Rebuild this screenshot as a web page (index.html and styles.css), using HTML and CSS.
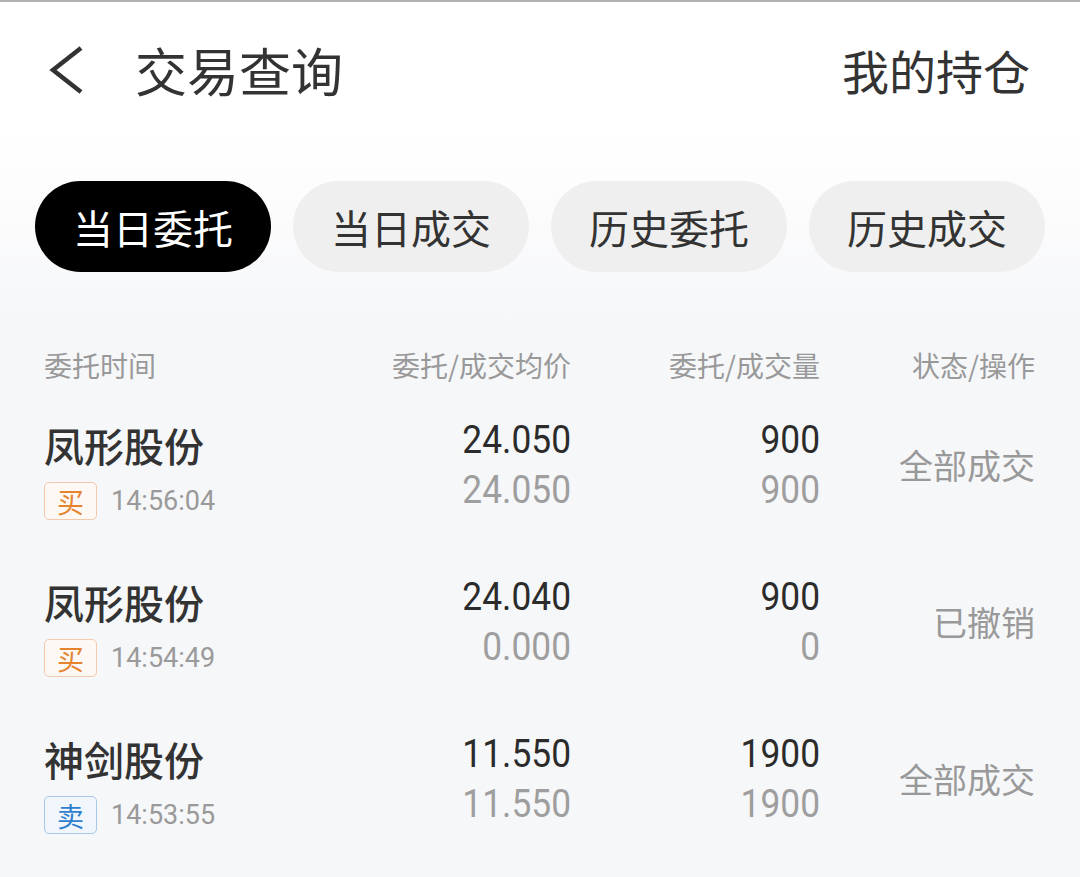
FILE: index.html
```html
<!DOCTYPE html>
<html lang="zh-CN">
<head>
<meta charset="utf-8">
<title>交易查询</title>
<link rel="stylesheet" href="styles.css">
</head>
<body>
<div class="page">
  <header class="topbar">
    <div class="left">
      <svg class="back" width="36" height="50" viewBox="0 0 36 50"><path d="M33 3 L5 25 L33 47" fill="none" stroke="#333" stroke-width="4.5" stroke-linejoin="miter"/></svg>
      <h1 class="title">交易查询</h1>
    </div>
    <div class="right">我的持仓</div>
  </header>

  <nav class="tabs">
    <div class="tab active">当日委托</div>
    <div class="tab">当日成交</div>
    <div class="tab">历史委托</div>
    <div class="tab">历史成交</div>
  </nav>

  <div class="table">
    <div class="grid head">
      <div class="c1">委托时间</div>
      <div class="c2">委托/成交均价</div>
      <div class="c3">委托/成交量</div>
      <div class="c4">状态/操作</div>
    </div>

    <div class="grid row">
      <div class="c1">
        <div class="name">凤形股份</div>
        <div class="meta"><span class="badge buy">买</span><span class="time">14:56:04</span></div>
      </div>
      <div class="c2 num"><div class="n1">24.050</div><div class="n2">24.050</div></div>
      <div class="c3 num"><div class="n1">900</div><div class="n2">900</div></div>
      <div class="c4 status">全部成交</div>
    </div>

    <div class="grid row">
      <div class="c1">
        <div class="name">凤形股份</div>
        <div class="meta"><span class="badge buy">买</span><span class="time">14:54:49</span></div>
      </div>
      <div class="c2 num"><div class="n1">24.040</div><div class="n2">0.000</div></div>
      <div class="c3 num"><div class="n1">900</div><div class="n2">0</div></div>
      <div class="c4 status">已撤销</div>
    </div>

    <div class="grid row">
      <div class="c1">
        <div class="name">神剑股份</div>
        <div class="meta"><span class="badge sell">卖</span><span class="time">14:53:55</span></div>
      </div>
      <div class="c2 num"><div class="n1">11.550</div><div class="n2">11.550</div></div>
      <div class="c3 num"><div class="n1">1900</div><div class="n2">1900</div></div>
      <div class="c4 status">全部成交</div>
    </div>
  </div>
</div>
</body>
</html>
```
FILE: styles.css
```css
* { box-sizing: border-box; margin: 0; padding: 0; }
html, body { width: 1080px; height: 877px; overflow: hidden; }
body {
  font-family: "Noto Sans CJK SC", "Noto Sans", sans-serif;
  color: #333;
  background: #f6f7f9;
}
.page {
  height: 877px;
  border-top: 2px solid #b3b3b3;
  background: linear-gradient(to bottom, #ffffff 0px, #ffffff 130px, #f6f7f9 320px, #f6f7f9 100%);
}
.topbar {
  height: 144px;
  display: flex;
  justify-content: space-between;
  align-items: flex-start;
  padding: 38px 50px 0 48px;
}
.left { display: flex; align-items: center; }
.back { display: block; margin-right: 51px; }
.title { font-size: 52px; font-weight: 400; line-height: 60px; color: #333; }
.right { font-size: 47px; line-height: 60px; color: #333; }

.tabs {
  display: flex;
  gap: 22px;
  padding: 35px 35px 0 35px;
}
.tab {
  width: 236px;
  height: 91px;
  border-radius: 46px;
  background: #efefef;
  display: flex;
  align-items: center;
  justify-content: center;
  font-size: 40px;
  color: #333;
}
.tab.active { background: #000; color: #fff; }

.table { padding: 0 45px 0 44px; }
.grid {
  display: grid;
  grid-template-columns: 300px 227px 249px 1fr;
}
.c2, .c3, .c4 { text-align: right; }
.head {
  margin-top: 73px;
  height: 40px;
  align-items: center;
  font-size: 28px;
  line-height: 40px;
  color: #999;
}
.row {
  height: 157px;
  padding-top: 30px;
  align-items: start;
}
.name {
  margin-top: 5px;
  font-size: 40px;
  line-height: 50px;
  font-weight: 500;
  color: #333;
}
.meta {
  margin-top: 12px;
  display: flex;
  align-items: center;
}
.badge {
  width: 53px;
  height: 38px;
  border-radius: 5px;
  display: flex;
  align-items: center;
  justify-content: center;
  font-size: 27px;
  line-height: 1;
}
.badge.buy { border: 1.5px solid #f2c9ac; color: #e5832f; background: #fdf8f4; }
.badge.sell { border: 1.5px solid #a8c8e8; color: #2f7fcf; background: #f1f6fc; }
.time {
  margin-left: 14px;
  font-family: "Roboto", "Noto Sans", sans-serif;
  font-size: 27px;
  color: #9a9a9a;
}
.num {
  font-family: "Roboto", "Noto Sans", sans-serif;
  font-size: 38px;
  line-height: 50px;
}
.n1, .n2 { transform: scaleX(0.93); transform-origin: right center; }
.n1 { color: #2b2b2b; }
.n2 { color: #9e9e9e; }
.status {
  align-self: center;
  font-size: 34px;
  line-height: 50px;
  color: #999;
  padding-bottom: 28px;
}
```
